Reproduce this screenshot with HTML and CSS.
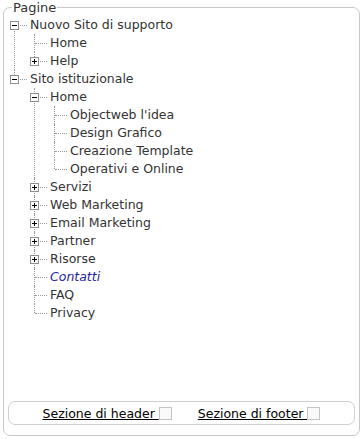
FILE: index.html
```html
<!DOCTYPE html>
<html lang="it">
<head>
<meta charset="utf-8">
<title>Pagine</title>
<link rel="stylesheet" href="styles.css">
</head>
<body>
<fieldset class="panel">
  <legend class="panel-title">Pagine</legend>
  <div class="panel-body">
    <ul class="tree root">
      <li class="node">
        <div class="row"><span class="gut"><svg class="box" width="9" height="9" viewBox="0 0 9 9"><rect x="0.5" y="0.5" width="8" height="8" fill="#fff" stroke="#8e8e8e"/><path d="M2 4.5h5" stroke="#000"/></svg></span><span class="label">Nuovo Sito di supporto</span></div>
        <ul class="tree">
          <li class="node"><div class="row"><span class="gut"></span><span class="label">Home</span></div></li>
          <li class="node"><div class="row"><span class="gut"><svg class="box" width="9" height="9" viewBox="0 0 9 9"><rect x="0.5" y="0.5" width="8" height="8" fill="#fff" stroke="#8e8e8e"/><path d="M2 4.5h5M4.5 2v5" stroke="#000"/></svg></span><span class="label">Help</span></div></li>
        </ul>
      </li>
      <li class="node">
        <div class="row"><span class="gut"><svg class="box" width="9" height="9" viewBox="0 0 9 9"><rect x="0.5" y="0.5" width="8" height="8" fill="#fff" stroke="#8e8e8e"/><path d="M2 4.5h5" stroke="#000"/></svg></span><span class="label">Sito istituzionale</span></div>
        <ul class="tree">
          <li class="node">
            <div class="row"><span class="gut"><svg class="box" width="9" height="9" viewBox="0 0 9 9"><rect x="0.5" y="0.5" width="8" height="8" fill="#fff" stroke="#8e8e8e"/><path d="M2 4.5h5" stroke="#000"/></svg></span><span class="label">Home</span></div>
            <ul class="tree">
              <li class="node"><div class="row"><span class="gut"></span><span class="label">Objectweb l'idea</span></div></li>
              <li class="node"><div class="row"><span class="gut"></span><span class="label">Design Grafico</span></div></li>
              <li class="node"><div class="row"><span class="gut"></span><span class="label">Creazione Template</span></div></li>
              <li class="node"><div class="row"><span class="gut"></span><span class="label">Operativi e Online</span></div></li>
            </ul>
          </li>
          <li class="node"><div class="row"><span class="gut"><svg class="box" width="9" height="9" viewBox="0 0 9 9"><rect x="0.5" y="0.5" width="8" height="8" fill="#fff" stroke="#8e8e8e"/><path d="M2 4.5h5M4.5 2v5" stroke="#000"/></svg></span><span class="label">Servizi</span></div></li>
          <li class="node"><div class="row"><span class="gut"><svg class="box" width="9" height="9" viewBox="0 0 9 9"><rect x="0.5" y="0.5" width="8" height="8" fill="#fff" stroke="#8e8e8e"/><path d="M2 4.5h5M4.5 2v5" stroke="#000"/></svg></span><span class="label">Web Marketing</span></div></li>
          <li class="node"><div class="row"><span class="gut"><svg class="box" width="9" height="9" viewBox="0 0 9 9"><rect x="0.5" y="0.5" width="8" height="8" fill="#fff" stroke="#8e8e8e"/><path d="M2 4.5h5M4.5 2v5" stroke="#000"/></svg></span><span class="label">Email Marketing</span></div></li>
          <li class="node"><div class="row"><span class="gut"><svg class="box" width="9" height="9" viewBox="0 0 9 9"><rect x="0.5" y="0.5" width="8" height="8" fill="#fff" stroke="#8e8e8e"/><path d="M2 4.5h5M4.5 2v5" stroke="#000"/></svg></span><span class="label">Partner</span></div></li>
          <li class="node"><div class="row"><span class="gut"><svg class="box" width="9" height="9" viewBox="0 0 9 9"><rect x="0.5" y="0.5" width="8" height="8" fill="#fff" stroke="#8e8e8e"/><path d="M2 4.5h5M4.5 2v5" stroke="#000"/></svg></span><span class="label">Risorse</span></div></li>
          <li class="node"><div class="row"><span class="gut"></span><span class="label current">Contatti</span></div></li>
          <li class="node"><div class="row"><span class="gut"></span><span class="label">FAQ</span></div></li>
          <li class="node"><div class="row"><span class="gut"></span><span class="label">Privacy</span></div></li>
        </ul>
      </li>
    </ul>
    <div class="sections">
      <label class="opt"><span class="opt-text">Sezione di header&nbsp;</span><input class="check" type="checkbox"></label>
      <label class="opt"><span class="opt-text">Sezione di footer&nbsp;</span><input class="check" type="checkbox"></label>
    </div>
  </div>
</fieldset>
</body>
</html>
```
FILE: styles.css
```css
html, body {
  margin: 0;
  padding: 0;
  background: #fff;
}
body {
  font-family: "DejaVu Sans", Verdana, sans-serif;
  font-size: 12.5px;
  color: #333;
}
.panel {
  box-sizing: border-box;
  margin: 0 4px 0 3px;
  width: 357px;
  height: 436px;
  padding: 0 3px 10px 3px;
  border: 1px solid #c8c8c8;
  border-radius: 7px;
}
.panel-title {
  margin-left: 5px;
  padding: 0 1px;
  font-size: 13px;
  line-height: 15px;
  color: #333;
}
.panel-body {
  height: 100%;
  display: flex;
  flex-direction: column;
}
.tree {
  list-style: none;
  margin: 0;
  padding: 0 0 0 20px;
}
.tree.root {
  padding: 1px 0 0 0;
  margin-left: -3px;
  flex: 1;
}
.node {
  position: relative;
}
.node::before {
  content: "";
  position: absolute;
  left: 10px;
  top: 0;
  bottom: 0;
  border-left: 1px dotted #9a9a9a;
}
.node:last-child::before {
  bottom: auto;
  height: 9px;
}
.root > .node:first-child::before {
  top: 9px;
}
.row {
  height: 18px;
  display: flex;
  align-items: center;
}
.gut {
  position: relative;
  width: 26px;
  height: 18px;
  flex: none;
}
.gut::before {
  content: "";
  position: absolute;
  left: 11px;
  top: 9px;
  width: 12px;
  border-top: 1px dotted #9a9a9a;
}
.box {
  position: absolute;
  left: 6px;
  top: 5px;
  display: block;
}
.label {
  white-space: nowrap;
  line-height: 18px;
}
.label.current {
  color: #1f1f9e;
  font-style: italic;
}
.sections {
  flex: none;
  height: 22px;
  margin: 0 1px;
  border: 1px solid #cfcfcf;
  border-radius: 7px;
  display: flex;
  justify-content: center;
  align-items: center;
  gap: 26px;
}
.opt {
  display: flex;
  align-items: center;
  color: #000;
}
.opt-text {
  text-decoration: underline;
}
.check {
  appearance: none;
  -webkit-appearance: none;
  margin: 0;
  width: 13px;
  height: 13px;
  border: 1px solid #c4c4c4;
  background: #fafafa;
  box-sizing: border-box;
}
```
